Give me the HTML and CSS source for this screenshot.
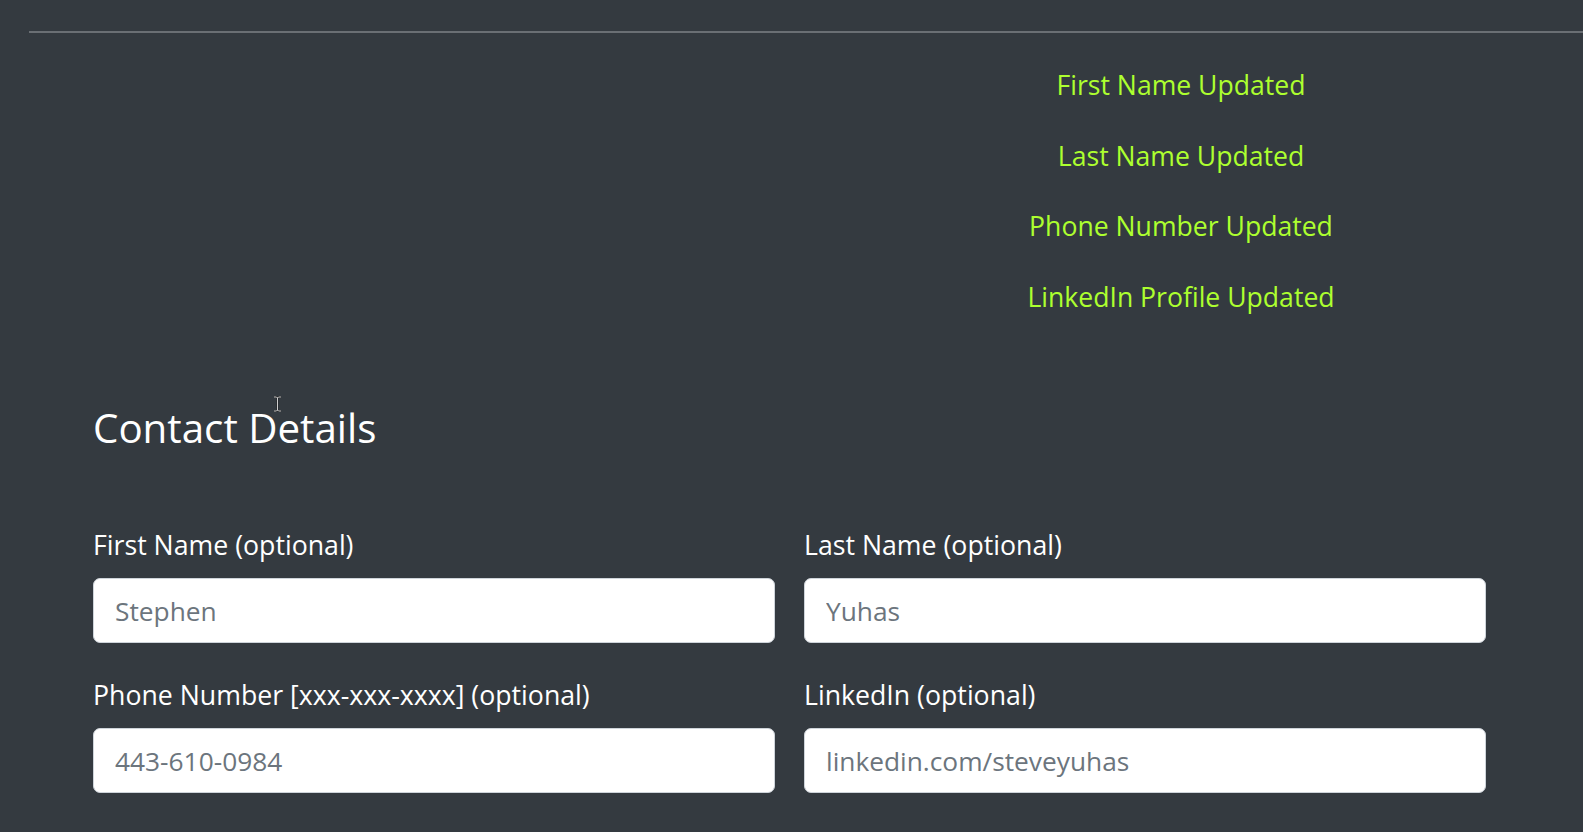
FILE: index.html
```html
<!DOCTYPE html>
<html lang="en">
<head>
<meta charset="utf-8">
<title>Contact Details</title>
<link rel="stylesheet" href="styles.css">
</head>
<body>
<div class="page">
  <hr class="divider">
  <div class="status-area">
    <div class="status-list">
      <p class="status">First Name Updated</p>
      <p class="status">Last Name Updated</p>
      <p class="status">Phone Number Updated</p>
      <p class="status">LinkedIn Profile Updated</p>
    </div>
  </div>
  <section class="contact">
    <h4 class="contact-title">Contact Details</h4>
    <form class="form-grid">
      <div class="form-group">
        <label class="form-label" for="first">First Name (optional)</label>
        <input class="form-control" id="first" type="text" placeholder="Stephen">
      </div>
      <div class="form-group">
        <label class="form-label" for="last">Last Name (optional)</label>
        <input class="form-control" id="last" type="text" placeholder="Yuhas">
      </div>
      <div class="form-group">
        <label class="form-label" for="phone">Phone Number [xxx-xxx-xxxx] (optional)</label>
        <input class="form-control" id="phone" type="text" placeholder="443-610-0984">
      </div>
      <div class="form-group">
        <label class="form-label" for="linkedin">LinkedIn (optional)</label>
        <input class="form-control" id="linkedin" type="text" placeholder="linkedin.com/steveyuhas">
      </div>
    </form>
  </section>
  <svg class="ibeam" width="9" height="16" viewBox="0 0 9 16" aria-hidden="true">
    <path d="M1 1h2.5l1 1 1-1H8M4.5 2v12M1 15h2.5l1-1 1 1H8" fill="none" stroke="#111" stroke-width="1.6"/>
    <path d="M1 1h2.5l1 1 1-1H8M4.5 2v12M1 15h2.5l1-1 1 1H8" fill="none" stroke="#fff" stroke-width="0.8"/>
  </svg>
</div>
</body>
</html>
```
FILE: styles.css
```css
html, body {
  margin: 0;
  padding: 0;
  background: #343a40;
}

body {
  font-family: "Open Sans", "Noto Sans", sans-serif;
  font-size: 26.7px;
  line-height: 42px;
  color: #ffffff;
  overflow: hidden;
}

.page {
  position: relative;
  width: 1583px;
  height: 832px;
  overflow: hidden;
}

.divider {
  margin: 31px 0 31px 29px;
  border: 0;
  border-top: 2px solid #6a6f74;
  height: 0;
}

.status-area {
  display: flex;
  justify-content: flex-end;
}

.status-list {
  width: 804px;
  text-align: center;
}

.status {
  margin: 0 0 28.6px 0;
  color: #adff2f;
  font-size: 26.6px;
  line-height: 42px;
}

.contact {
  padding: 57px 0 0 93px;
  width: 1393px;
}

.contact-title {
  margin: 0 0 69px 0;
  font-size: 40.3px;
  font-weight: 400;
  line-height: 50px;
  color: #ffffff;
}

.form-grid {
  display: grid;
  grid-template-columns: 1fr 1fr;
  column-gap: 29px;
}

.form-group {
  margin-bottom: 29px;
}

.form-label {
  display: block;
  line-height: 42px;
  padding-top: 2px;
  margin-bottom: 12px;
  color: #ffffff;
}

.form-control {
  display: block;
  box-sizing: border-box;
  width: 100%;
  height: 65px;
  margin: 0;
  padding: 1px 21px 0;
  border: 1px solid #ced4da;
  border-radius: 7px;
  background: #ffffff;
  font-family: inherit;
  font-size: 26.3px;
  color: #495057;
  outline: none;
}

.form-control::placeholder {
  color: #6c757d;
  opacity: 1;
}

.ibeam {
  position: absolute;
  left: 273px;
  top: 396px;
}
```
